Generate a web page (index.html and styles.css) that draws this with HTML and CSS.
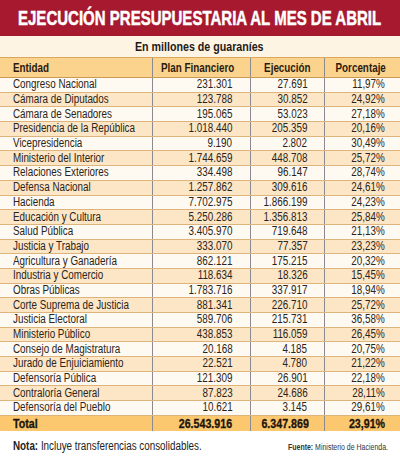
FILE: index.html
```html
<!DOCTYPE html>
<html lang="es">
<head>
<meta charset="utf-8">
<title>Ejecución presupuestaria</title>
<link rel="stylesheet" href="styles.css">
</head>
<body>
<div class="page">
  <header class="title-band"><h1 class="title"><span class="t">EJECUCIÓN PRESUPUESTARIA AL MES DE ABRIL</span></h1></header>
  <div class="subtitle"><span class="t">En millones de guaraníes</span></div>
  <table class="budget">
    <thead>
      <tr><th class="c-ent"><span class="t">Entidad</span></th><th class="c-plan"><span class="t">Plan Financiero</span></th><th class="c-ejec"><span class="t">Ejecución</span></th><th class="c-pct"><span class="t">Porcentaje</span></th></tr>
    </thead>
    <tbody>
      <tr><td class="c-ent"><span class="t">Congreso Nacional</span></td><td class="c-plan"><span class="t">231.301</span></td><td class="c-ejec"><span class="t">27.691</span></td><td class="c-pct"><span class="t">11,97%</span></td></tr>
      <tr><td class="c-ent"><span class="t">Cámara de Diputados</span></td><td class="c-plan"><span class="t">123.788</span></td><td class="c-ejec"><span class="t">30.852</span></td><td class="c-pct"><span class="t">24,92%</span></td></tr>
      <tr><td class="c-ent"><span class="t">Cámara de Senadores</span></td><td class="c-plan"><span class="t">195.065</span></td><td class="c-ejec"><span class="t">53.023</span></td><td class="c-pct"><span class="t">27,18%</span></td></tr>
      <tr><td class="c-ent"><span class="t">Presidencia de la República</span></td><td class="c-plan"><span class="t">1.018.440</span></td><td class="c-ejec"><span class="t">205.359</span></td><td class="c-pct"><span class="t">20,16%</span></td></tr>
      <tr><td class="c-ent"><span class="t">Vicepresidencia</span></td><td class="c-plan"><span class="t">9.190</span></td><td class="c-ejec"><span class="t">2.802</span></td><td class="c-pct"><span class="t">30,49%</span></td></tr>
      <tr><td class="c-ent"><span class="t">Ministerio del Interior</span></td><td class="c-plan"><span class="t">1.744.659</span></td><td class="c-ejec"><span class="t">448.708</span></td><td class="c-pct"><span class="t">25,72%</span></td></tr>
      <tr><td class="c-ent"><span class="t">Relaciones Exteriores</span></td><td class="c-plan"><span class="t">334.498</span></td><td class="c-ejec"><span class="t">96.147</span></td><td class="c-pct"><span class="t">28,74%</span></td></tr>
      <tr><td class="c-ent"><span class="t">Defensa Nacional</span></td><td class="c-plan"><span class="t">1.257.862</span></td><td class="c-ejec"><span class="t">309.616</span></td><td class="c-pct"><span class="t">24,61%</span></td></tr>
      <tr><td class="c-ent"><span class="t">Hacienda</span></td><td class="c-plan"><span class="t">7.702.975</span></td><td class="c-ejec"><span class="t">1.866.199</span></td><td class="c-pct"><span class="t">24,23%</span></td></tr>
      <tr><td class="c-ent"><span class="t">Educación y Cultura</span></td><td class="c-plan"><span class="t">5.250.286</span></td><td class="c-ejec"><span class="t">1.356.813</span></td><td class="c-pct"><span class="t">25,84%</span></td></tr>
      <tr><td class="c-ent"><span class="t">Salud Pública</span></td><td class="c-plan"><span class="t">3.405.970</span></td><td class="c-ejec"><span class="t">719.648</span></td><td class="c-pct"><span class="t">21,13%</span></td></tr>
      <tr><td class="c-ent"><span class="t">Justicia y Trabajo</span></td><td class="c-plan"><span class="t">333.070</span></td><td class="c-ejec"><span class="t">77.357</span></td><td class="c-pct"><span class="t">23,23%</span></td></tr>
      <tr><td class="c-ent"><span class="t">Agricultura y Ganadería</span></td><td class="c-plan"><span class="t">862.121</span></td><td class="c-ejec"><span class="t">175.215</span></td><td class="c-pct"><span class="t">20,32%</span></td></tr>
      <tr><td class="c-ent"><span class="t">Industria y Comercio</span></td><td class="c-plan"><span class="t">118.634</span></td><td class="c-ejec"><span class="t">18.326</span></td><td class="c-pct"><span class="t">15,45%</span></td></tr>
      <tr><td class="c-ent"><span class="t">Obras Públicas</span></td><td class="c-plan"><span class="t">1.783.716</span></td><td class="c-ejec"><span class="t">337.917</span></td><td class="c-pct"><span class="t">18,94%</span></td></tr>
      <tr><td class="c-ent"><span class="t">Corte Suprema de Justicia</span></td><td class="c-plan"><span class="t">881.341</span></td><td class="c-ejec"><span class="t">226.710</span></td><td class="c-pct"><span class="t">25,72%</span></td></tr>
      <tr><td class="c-ent"><span class="t">Justicia Electoral</span></td><td class="c-plan"><span class="t">589.706</span></td><td class="c-ejec"><span class="t">215.731</span></td><td class="c-pct"><span class="t">36,58%</span></td></tr>
      <tr><td class="c-ent"><span class="t">Ministerio Público</span></td><td class="c-plan"><span class="t">438.853</span></td><td class="c-ejec"><span class="t">116.059</span></td><td class="c-pct"><span class="t">26,45%</span></td></tr>
      <tr><td class="c-ent"><span class="t">Consejo de Magistratura</span></td><td class="c-plan"><span class="t">20.168</span></td><td class="c-ejec"><span class="t">4.185</span></td><td class="c-pct"><span class="t">20,75%</span></td></tr>
      <tr><td class="c-ent"><span class="t">Jurado de Enjuiciamiento</span></td><td class="c-plan"><span class="t">22.521</span></td><td class="c-ejec"><span class="t">4.780</span></td><td class="c-pct"><span class="t">21,22%</span></td></tr>
      <tr><td class="c-ent"><span class="t">Defensoría Pública</span></td><td class="c-plan"><span class="t">121.309</span></td><td class="c-ejec"><span class="t">26.901</span></td><td class="c-pct"><span class="t">22,18%</span></td></tr>
      <tr><td class="c-ent"><span class="t">Contraloría General</span></td><td class="c-plan"><span class="t">87.823</span></td><td class="c-ejec"><span class="t">24.686</span></td><td class="c-pct"><span class="t">28,11%</span></td></tr>
      <tr><td class="c-ent"><span class="t">Defensoría del Pueblo</span></td><td class="c-plan"><span class="t">10.621</span></td><td class="c-ejec"><span class="t">3.145</span></td><td class="c-pct"><span class="t">29,61%</span></td></tr>
    </tbody>
    <tfoot>
      <tr><td class="c-ent"><span class="t">Total</span></td><td class="c-plan"><span class="t">26.543.916</span></td><td class="c-ejec"><span class="t">6.347.869</span></td><td class="c-pct"><span class="t">23,91%</span></td></tr>
    </tfoot>
  </table>
  <footer class="notes">
    <p class="note"><span class="t"><b>Nota:</b> Incluye transferencias consolidables.</span></p>
    <p class="source"><span class="t"><b>Fuente:</b> Ministerio de Hacienda.</span></p>
  </footer>
</div>
</body>
</html>
```

FILE: styles.css
```css
* { box-sizing: border-box; }
html, body { margin: 0; padding: 0; background: #ffffff; }
body {
  font-family: "Liberation Sans", Arial, sans-serif;
  color: #2a2420;
}
.page { width: 400px; overflow: hidden; }

/* condensed look: Arial-metric text squeezed horizontally */
.t { display: inline-block; white-space: nowrap; transform: scaleX(0.82); transform-origin: left center; }

.title-band {
  height: 36px;
  background: #a6192e;
  display: flex;
  align-items: center;
  justify-content: center;
}
.title {
  margin: 0;
  width: 364px;
  color: #ffffff;
  font-size: 21px;
  line-height: 24px;
  font-weight: bold;
  white-space: nowrap;
}
.title .t { transform: scaleX(0.715); -webkit-text-stroke: 0.5px #ffffff; }

.subtitle {
  height: 21px;
  padding-left: 135px;
  background: #fdf4e4;
  font-weight: bold;
  font-size: 13px;
  line-height: 21px;
  color: #1e1a16;
}

.budget {
  width: 400px;
  border-collapse: collapse;
  table-layout: fixed;
}
.budget .c-ent { width: 152px; text-align: left; padding-left: 13px; }
.budget .c-plan { width: 98px; }
.budget .c-ejec { width: 74px; }
.budget .c-pct { width: 76px; }

.budget th {
  height: 20px;
  background: #fcd38c;
  border-top: 1px solid #d9a85e;
  border-bottom: 1px solid #c99a55;
  font-size: 12px;
  font-weight: bold;
  color: #2b1b0e;
  text-align: center;
  padding: 0;
}
.budget th .t { transform-origin: center center; }
.budget th.c-ent { text-align: left; padding-left: 13px; }
.budget th.c-ent .t { transform-origin: left center; }
.budget th.c-plan { padding-right: 8px; }
.budget th.c-pct { padding-right: 4px; }
.budget th + th, .budget td + td { border-left: 1.5px solid #8b8a90; }

.budget td {
  height: 14.7px;
  font-size: 12px;
  line-height: 13px;
  padding: 0;
  border-bottom: 1px solid #dcb47c;
  white-space: nowrap;
}
.budget tbody tr:nth-child(odd) { background: #fffaf1; }
.budget tbody tr:nth-child(even) { background: #fde6c5; }

.budget td.c-plan, .budget td.c-ejec, .budget td.c-pct { text-align: right; }
.budget td.c-plan .t, .budget td.c-ejec .t, .budget td.c-pct .t { transform-origin: right center; }
.budget td.c-plan { padding-right: 17px; }
.budget td.c-ejec { padding-right: 16px; }
.budget td.c-pct { padding-right: 15px; }

.budget tfoot td {
  height: 16px;
  background: #fbc870;
  border-top: 1px solid #c8913a;
  border-bottom: none;
  font-weight: bold;
  font-size: 13px;
  color: #1e140a;
}
.budget tfoot td .t { -webkit-text-stroke: 0.3px #1e140a; }

.notes {
  display: flex;
  justify-content: space-between;
  align-items: baseline;
  padding: 8px 0 0 13px;
}
.note { margin: 0; font-size: 12px; color: #222; flex: 1; }
.source { margin: 0; font-size: 8.5px; color: #333; width: 112px; }
```
